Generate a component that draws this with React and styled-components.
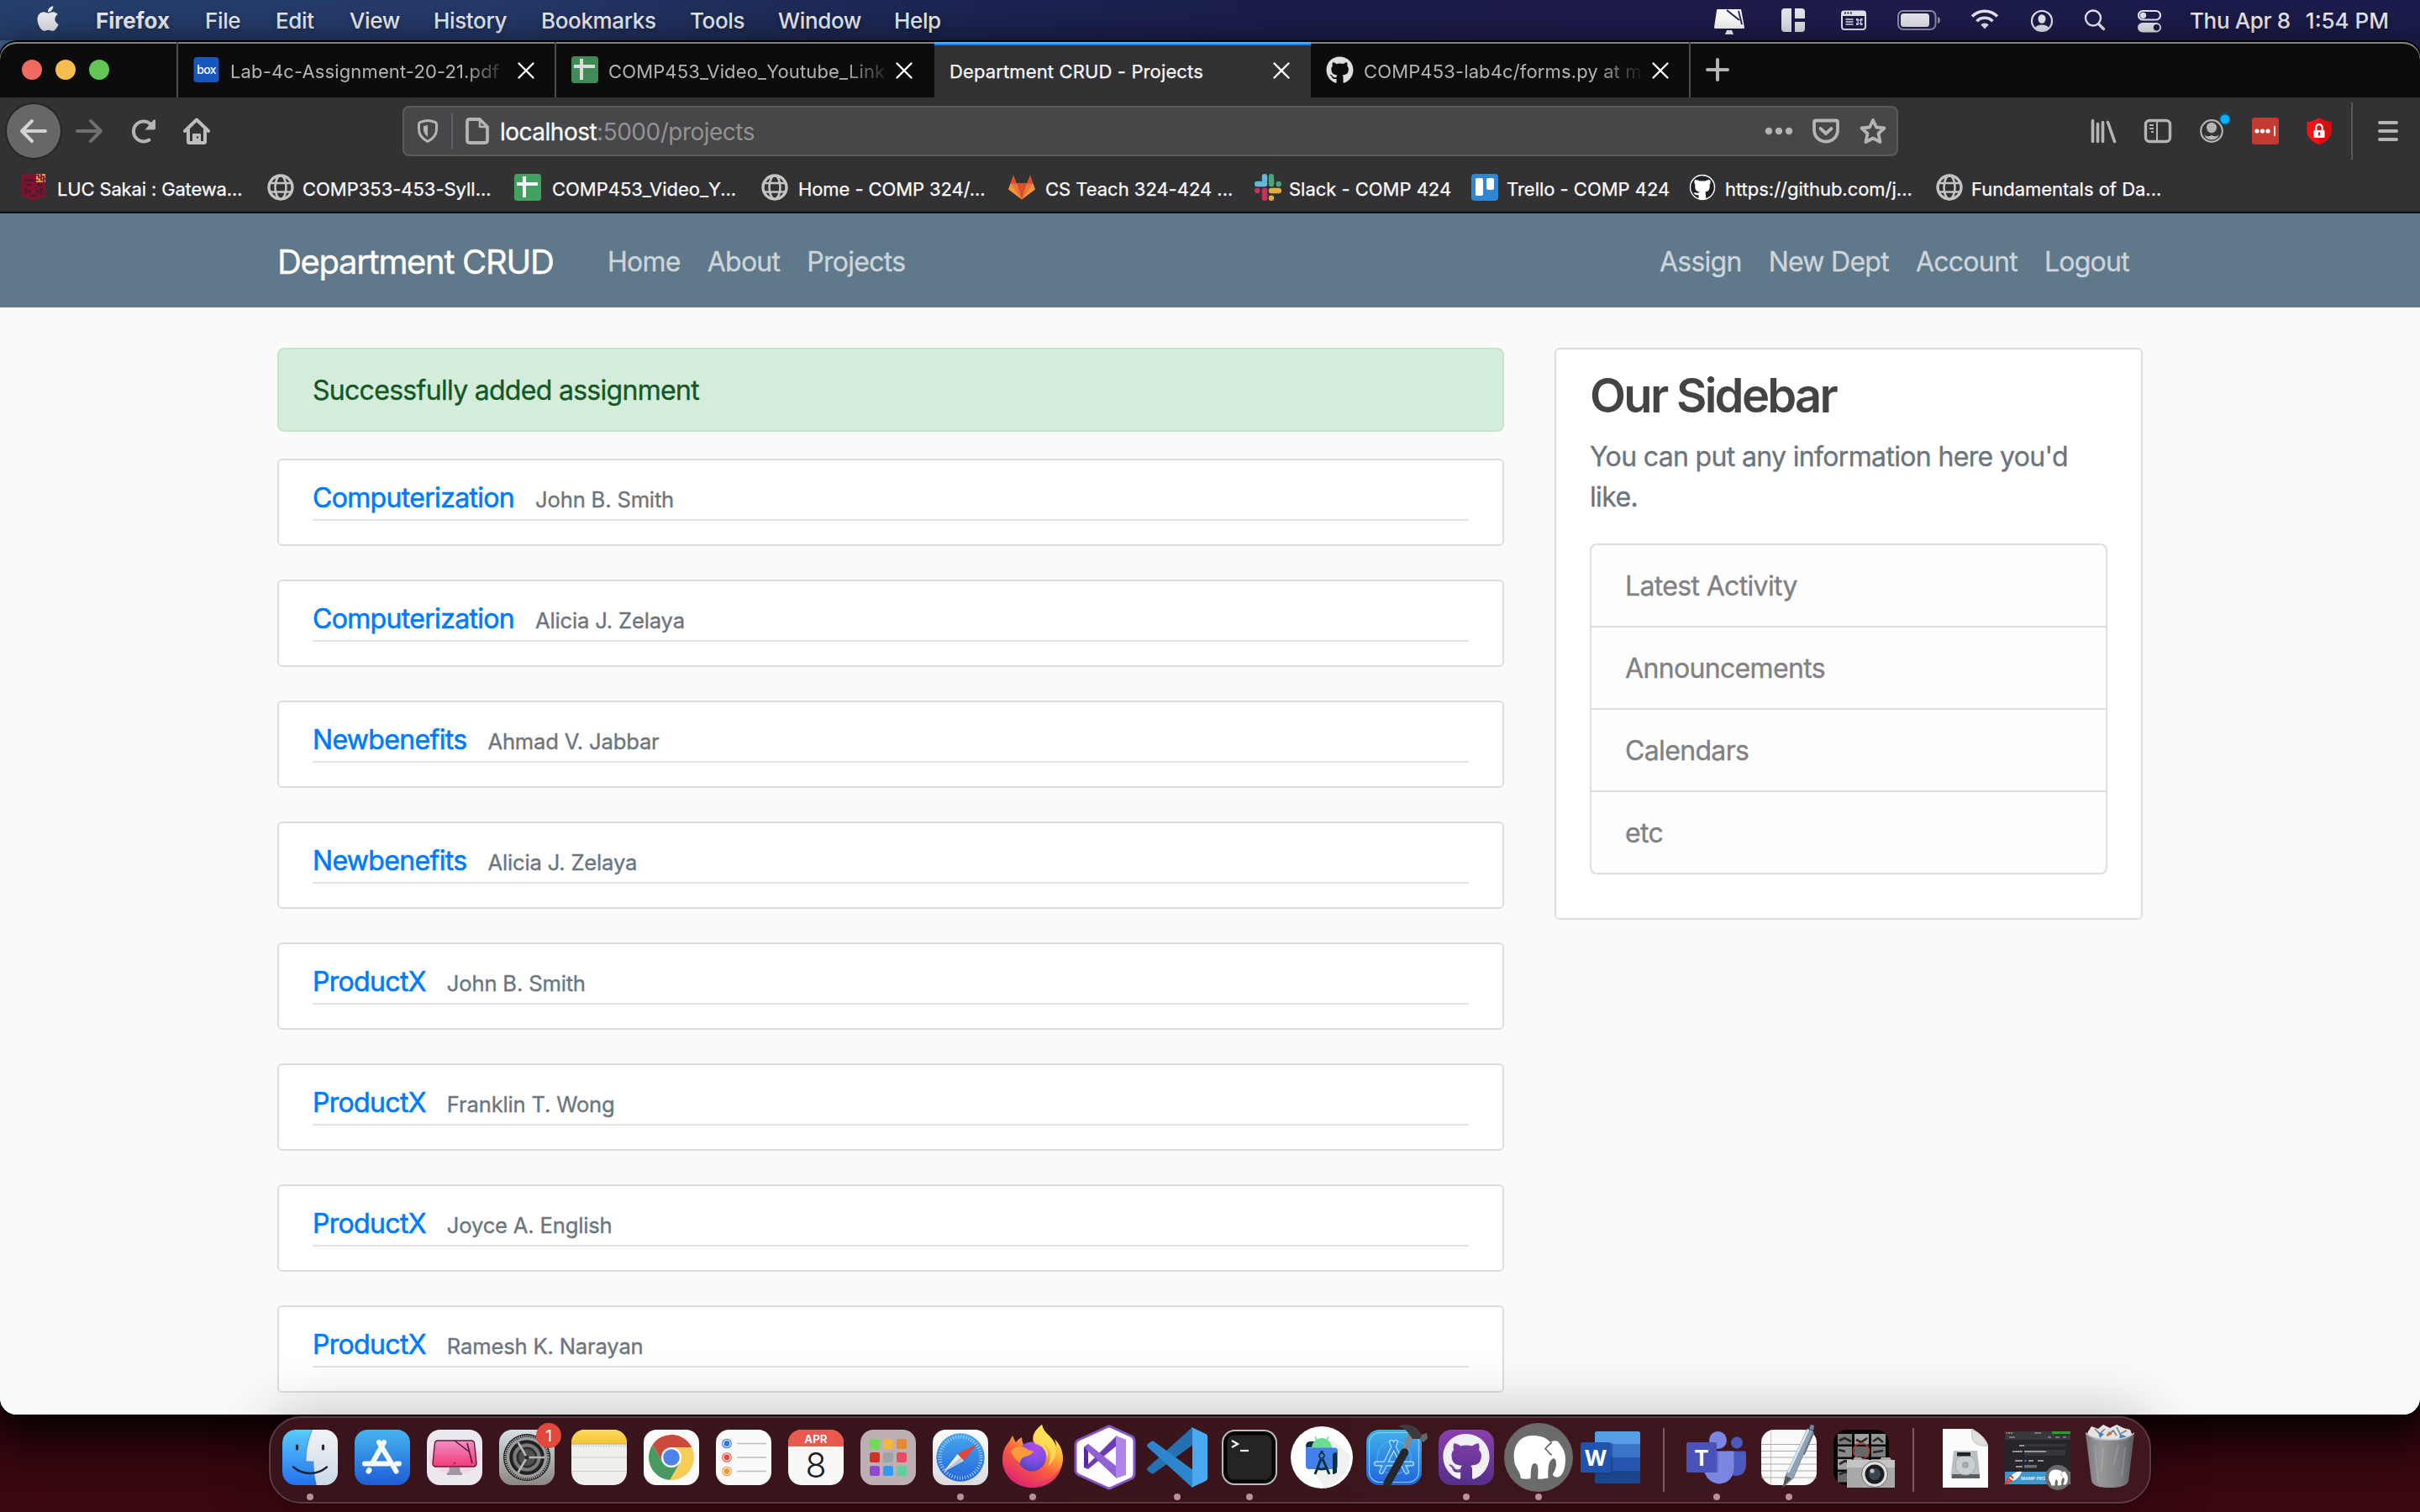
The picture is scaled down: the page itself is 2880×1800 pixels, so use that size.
import React from 'react';
import styled, { createGlobalStyle, css } from 'styled-components';
import { FaApple, FaGithub } from 'react-icons/fa';

const GlobalStyle = createGlobalStyle`
  * { box-sizing: border-box; }
  html, body { margin: 0; padding: 0; overflow: hidden; }
  body {
    font-family: Inter, Roboto, "Liberation Sans", sans-serif;
    -webkit-font-smoothing: antialiased;
  }
  h3, p, ul { margin: 0; padding: 0; }
  a { text-decoration: none; color: inherit; }
`;

/* ---------- Desktop ---------- */

const Desktop = styled.div`
  width: 2880px;
  height: 1800px;
  overflow: hidden;
  display: flex;
  flex-direction: column;
  background:
    linear-gradient(90deg, #47688c, #1f3a5e 33%, #1b1c48 60%, #1e1e50) 0 0 / 100% 100px no-repeat,
    linear-gradient(180deg, #1c0a24, #36060f 1500px, #38070f);
`;

const MenuBar = styled.header`
  height: 48px;
  flex: none;
  display: flex;
  align-items: center;
  color: #e9ebf0;
  font-size: 26px;
  font-weight: 500;
  letter-spacing: -0.014em;
  text-shadow: 0 2px 6px rgba(0, 0, 0, 0.3);
  background: linear-gradient(90deg, #253f6c, #25396a 20%, #1f2c58 32%, #1c2250 42%, #1b1d4a 55%, #1e1c4b 65%, #1c1d4d);
`;

const AppleSlot = styled.div`
  width: 114px;
  padding-left: 43px;
  display: flex;
  svg { width: 28px; height: 34px; margin-top: -4px; }
`;

const MenuItem = styled.span`
  width: ${(p) => p.$w}px;
  white-space: nowrap;
  font-weight: ${(p) => (p.$strong ? 700 : 500)};
  letter-spacing: ${(p) => (p.$strong ? '0' : 'inherit')};
`;

const StatusArea = styled.div`
  margin-left: auto;
  display: flex;
  align-items: center;
  padding-right: 37px;
`;

const StatusSlot = styled.div`
  width: ${(p) => p.$w}px;
  display: flex;
  justify-content: center;
`;

const Clock = styled.div`
  width: 238px;
  margin-left: 13px;
  display: flex;
  justify-content: space-between;
  white-space: nowrap;
  padding-left: 1px;
  span + span { letter-spacing: 0; }
`;

/* ---------- Browser window ---------- */

const Window = styled.section`
  height: 1634px;
  margin-top: 2px;
  flex: none;
  display: flex;
  flex-direction: column;
  overflow: hidden;
  border-radius: 20px;
  background: #fafafa;
  box-shadow: 0 0 0 2px #000, 0 20px 50px 10px rgba(0, 0, 0, 0.85);
`;

const TabStrip = styled.div`
  height: 66px;
  flex: none;
  display: flex;
  background: #0c0c0d;
  border-radius: 20px 20px 0 0;
  box-shadow: inset 0 2px 0 #828283;
`;

const TrafficLights = styled.div`
  width: 212px;
  padding: 0 0 0 26px;
  display: flex;
  align-items: center;
  gap: 16px;
  border-right: 2px solid #4b4b4c;
`;

const Light = styled.i`
  width: 24px;
  height: 24px;
  border-radius: 50%;
  background: ${(p) => p.$c};
`;

const Tab = styled.div`
  width: ${(p) => p.$w}px;
  display: flex;
  align-items: center;
  padding: 2px 0 0 18px;
  font-size: 22px;
  letter-spacing: 0.006em;
  color: #b4b4b6;
  border-right: 2px solid ${(p) => (p.$divider ? '#4b4b4c' : 'transparent')};
  ${(p) =>
    p.$active &&
    css`
      background: #323234;
      color: #f9f9fa;
      border-right: 0;
      box-shadow: inset 0 2px 0 #5cabf8, inset 0 4px 0 #0a84ff;
      -webkit-text-stroke: 0.25px currentColor;
    `}
  > svg { flex: none; margin: -2px 12px 0 0; }
`;

const TabTitle = styled.span`
  width: ${(p) => p.$w}px;
  padding-top: 2px;
  white-space: nowrap;
  ${(p) =>
    p.$fade &&
    css`
      mask-image: linear-gradient(90deg, #000 calc(100% - 56px), transparent);
    `}
`;

const CloseSlot = styled.span`
  margin-left: ${(p) => p.$gap}px;
  display: flex;
`;

const NewTab = styled.div`
  width: 64px;
  display: flex;
  align-items: center;
  justify-content: center;
`;

const Toolbar = styled.div`
  height: 80px;
  flex: none;
  display: flex;
  align-items: center;
  padding-left: 8px;
  background: #323234;
`;

const ToolButton = styled.div`
  width: 64px;
  height: 64px;
  margin-right: ${(p) => p.$gap || 0}px;
  display: flex;
  align-items: center;
  justify-content: center;
  border-radius: 50%;
  ${(p) =>
    p.$raised &&
    css`
      background: #676768;
      box-shadow: 0 0 0 2px #262627;
    `}
`;

const UrlBar = styled.div`
  width: 1780px;
  height: 60px;
  margin: 0 213px 0 213px;
  display: flex;
  align-items: center;
  padding: 0 10px 0 12px;
  border: 2px solid #5b5b5d;
  border-radius: 8px;
  background: #474749;
  > svg { flex: none; }
`;

const UrlDivider = styled.i`
  width: 2px;
  height: 42px;
  margin: 0 14px 0 12px;
  background: #5f6068;
`;

const Url = styled.div`
  margin: 2px auto 0 12px;
  font-size: 28px;
  letter-spacing: -0.018em;
  color: #929294;
  b {
    font-weight: 400;
    color: #fbfbfe;
    -webkit-text-stroke: 0.3px currentColor;
  }
`;

const UrlActions = styled.div`
  display: flex;
  align-items: center;
  gap: 20px;
`;

const ToolDivider = styled.i`
  width: 2px;
  height: 68px;
  margin: 0 10px 0 6px;
  background: #58585a;
`;

const BookmarksBar = styled.div`
  height: 58px;
  flex: none;
  display: flex;
  align-items: center;
  padding: 0 0 2px 24px;
  background: #323234;
  border-bottom: 2px solid #0c0c0d;
`;

const Bookmark = styled.div`
  width: ${(p) => p.$w}px;
  display: flex;
  align-items: center;
  gap: ${(p) => p.$gap}px;
  font-size: 22px;
  letter-spacing: ${(p) => p.$ls || '-0.001em'};
  white-space: nowrap;
  color: #fbfbfe;
  -webkit-text-stroke: 0.25px currentColor;
  svg { flex: none; }
  span { padding-top: 3px; }
`;

/* ---------- Page ---------- */

const Page = styled.div`
  flex: 1;
  min-height: 0;
  overflow: hidden;
  background: #fafafa;
  font-size: 32px;
  line-height: 48px;
  letter-spacing: -0.0205em;
  -webkit-text-stroke: 0.35px currentColor;
`;

const Navbar = styled.nav`
  height: 112px;
  background: #5f788a;
`;

const Container = styled.div`
  width: 2280px;
  height: 100%;
  margin: 0 auto;
  padding: 3px 30px 0;
  display: flex;
  align-items: center;
`;

const Brand = styled.a`
  width: 377px;
  font-size: 40px;
  letter-spacing: -0.033em;
  color: #fff;
`;

const NavGroup = styled.div`
  display: flex;
  gap: 32px;
  padding: 0 16px;
  letter-spacing: -0.023em;
  margin-left: ${(p) => (p.$end ? 'auto' : 0)};
`;

const NavLink = styled.a`
  color: #cbd5db;
`;

const Columns = styled.main`
  width: 2280px;
  margin: 48px auto 0;
  padding: 0 30px;
  display: grid;
  grid-template-columns: 1460px 700px;
  column-gap: 60px;
  align-items: start;
`;

const Alert = styled.div`
  height: 100px;
  margin-bottom: 32px;
  padding: 25px 40px 23px;
  border: 2px solid #c3e6cb;
  border-radius: 8px;
  background: #d4edda;
  color: #155724;
  letter-spacing: -0.022em;
`;

const Card = styled.article`
  margin-bottom: 40px;
  padding: 20px 40px;
  border: 2px solid #dddddd;
  border-radius: 6px;
  background: #fff;
`;

const CardMeta = styled.div`
  height: 52px;
  margin-bottom: 8px;
  padding-top: 1px;
  display: flex;
  align-items: baseline;
  gap: 25px;
  border-bottom: 2px solid #e3e3e3;
`;

const ProjectLink = styled.a`
  color: #007bff;
  letter-spacing: -0.021em;
  -webkit-text-stroke: 0.6px currentColor;
`;

const Person = styled.small`
  font-size: 25.6px;
  letter-spacing: -0.007em;
  color: #6c757d;
`;

const Sidebar = styled.aside`
  padding: 20px 40px 52px;
  border: 2px solid #dddddd;
  border-radius: 6px;
  background: #fff;
`;

const SidebarTitle = styled.h3`
  padding-top: 2px;
  margin-bottom: 15px;
  font-size: 56px;
  line-height: 67px;
  font-weight: 600;
  letter-spacing: -0.048em;
  color: #444;
  -webkit-text-stroke: 0;
`;

const SidebarText = styled.p`
  margin-bottom: 31px;
  color: #6c757d;
`;

const SidebarList = styled.ul`
  list-style: none;
  border: 2px solid #dcddde;
  border-radius: 8px;
  overflow: hidden;
  background: #fdfdfe;
`;

const SidebarItem = styled.li`
  padding: 25px 40px 23px;
  color: #818182;
  & + & { border-top: 2px solid #dcddde; }
`;

/* ---------- Dock ---------- */

const Dock = styled.footer`
  position: relative;
  width: 2240px;
  height: 104px;
  margin: 2px auto 0;
  flex: none;
  display: flex;
  padding-left: 4px;
  border: 2px solid #5c3a41;
  border-radius: 38px;
  background: linear-gradient(90deg, #39141c, #3b151c 50%, #41171f);
  box-shadow: 0 0 0 1px rgba(0, 0, 0, 0.5), 0 0 70px 6px rgba(0, 0, 0, 0.22);
`;

const DockSlot = styled.div`
  width: 86px;
  display: flex;
  svg { overflow: visible; flex: none; }
`;

const DockDivider = styled.i`
  width: 2px;
  height: 76px;
  margin: 12px ${(p) => p.$m}px 0;
  background: #7c5a62;
`;

/* ---------- Small icons, drawn round their own centre ---------- */

const Glyph = ({ w = 32, h = 32, children, ...rest }) => (
  <svg width={w} height={h} viewBox={`${-w / 2} ${-h / 2} ${w} ${h}`} fill="none" {...rest}>
    {children}
  </svg>
);

const LIGHT = '#e6e6ee';
const GREY = '#b4b4b6';

const StatusMonitor = () => (
  <Glyph w={44} h={48}>
    <path d="M-14-13H14L18 8.500Q18 10 16.500 10H-16.500Q-18 10-18 8.500L-15-11.500Q-15-13-14-13Z" fill="#fff" />
    <path d="M-3-12L12 0M11-11L15 5" stroke="#1c1d4b" strokeWidth="1.800" />
    <path d="M-3 12H3L5 17H-5Z" fill="#fff" />
  </Glyph>
);
const StatusPanels = () => (
  <Glyph w={44} h={48}>
    <path d="M-10-14H-2V14H-10Q-14 14-14 10V-10Q-14-14-10-14Z" fill={LIGHT} />
    <path d="M2-14H10Q14-14 14-10V-2H2Z" fill={LIGHT} />
    <path d="M2 2H14V10Q14 14 10 14H2Z" fill={LIGHT} />
  </Glyph>
);
const StatusWindow = () => (
  <Glyph w={44} h={48}>
    <rect x="-14" y="-10.500" width="28" height="21.500" rx="3" stroke={LIGHT} strokeWidth="2" />
    <path d="M-14-11H14V-5H-14Z" fill={LIGHT} />
    <path d="M-11-8.500h1.800M-7.500-8.500h1.800M-4-8.500h1.800" stroke="#1c1d4b" strokeWidth="2" />
    <path d="M-9.500-1h9M-9.500 2h9M-9.500 5h9" stroke={LIGHT} strokeWidth="1.600" />
    <path d="M5 0h3.500v4H5zM5 0v-1.500h-1.500V0zM8.500 0h1.500v-1.500H8.500zM5 4v1.500H3.500V4zM8.500 4v1.500h1.500V4z" stroke={LIGHT} strokeWidth="1.100" />
  </Glyph>
);
const StatusBattery = () => (
  <Glyph w={52} h={48}>
    <rect x="-24" y="-11" width="44.500" height="22" rx="6" stroke="#8d8ea6" strokeWidth="2" />
    <rect x="-21" y="-8" width="34" height="16" rx="3.500" fill={LIGHT} />
    <path d="M23-4Q26-3 26 0Q26 3 23 4Z" fill="#8d8ea6" />
  </Glyph>
);
const StatusWifi = () => (
  <Glyph w={44} h={48} stroke={LIGHT} strokeWidth="3.600">
    <path d="M-15-4.500A21 21 0 0 1 15-4.500M-9.500 1.200A13.500 13.500 0 0 1 9.500 1.200" />
    <path d="M0 10.500L-4.800 5.500A7 7 0 0 1 4.800 5.500Z" fill={LIGHT} stroke="none" />
  </Glyph>
);
const StatusUser = () => (
  <Glyph w={44} h={48}>
    <circle cx="0" cy="1" r="12" stroke={LIGHT} strokeWidth="2.200" />
    <ellipse cx="0" cy="-1.500" rx="4.500" ry="5.200" fill={LIGHT} />
    <path d="M-8.500 9.500Q-6 5.500 0 5.500Q6 5.500 8.500 9.500Q5 13 0 13Q-5 13-8.500 9.500Z" fill={LIGHT} />
  </Glyph>
);
const StatusSearch = () => (
  <Glyph w={44} h={48} stroke={LIGHT}>
    <circle cx="-2" cy="-2.500" r="9" strokeWidth="2.400" />
    <path d="M4.500 4.500L10.500 10.500" strokeWidth="3.400" strokeLinecap="round" />
  </Glyph>
);
const StatusControls = () => (
  <Glyph w={44} h={48}>
    <rect x="-13" y="-11" width="26" height="10.500" rx="5.250" stroke={LIGHT} strokeWidth="2.200" />
    <circle cx="-7.500" cy="-5.700" r="3.600" fill={LIGHT} />
    <rect x="-14" y="3" width="28" height="11.500" rx="5.750" fill={LIGHT} />
    <circle cx="8.500" cy="8.700" r="3.700" fill="#1c1d4b" />
  </Glyph>
);

const BoxIcon = () => (
  <Glyph>
    <rect x="-15.500" y="-15" width="30" height="30" rx="4" fill="#1858bd" />
    <text x="-0.500" y="5" textAnchor="middle" fontFamily="Inter" fontSize="14" fontWeight="500" letterSpacing="-0.700" fill="#fff">box</text>
  </Glyph>
);
const SheetsIcon = ({ dim }) => (
  <Glyph>
    <rect x="-16" y="-16" width="32" height="32" rx="3.500" fill={dim ? '#3f8a56' : '#43a15f'} />
    <path d="M-13-4H12M-4-13V12" stroke={dim ? '#dcdcdc' : '#fff'} strokeWidth="4" />
  </Glyph>
);
const CloseIcon = () => (
  <Glyph w={22} h={22} stroke="#fbfbfe" strokeWidth="2.400" strokeLinecap="round">
    <path d="M-8.500-8.500L8.500 8.500M8.500-8.500L-8.500 8.500" />
  </Glyph>
);
const PlusIcon = () => (
  <Glyph stroke={GREY} strokeWidth="4" strokeLinecap="round">
    <path d="M-12 0H12M0-12V12" />
  </Glyph>
);
const BackIcon = () => (
  <Glyph w={36} h={32} stroke="#d2d2d3" strokeWidth="4" strokeLinecap="round" strokeLinejoin="round">
    <path d="M14 0H-14M-2-12L-14 0L-2 12" />
  </Glyph>
);
const ForwardIcon = () => (
  <Glyph w={36} h={32} stroke="#6f6f71" strokeWidth="4" strokeLinecap="round" strokeLinejoin="round">
    <path d="M-14 0H14M2-12L14 0L2 12" />
  </Glyph>
);
const ReloadIcon = () => (
  <Glyph stroke={GREY} strokeWidth="4" strokeLinecap="round">
    <path d="M9.500-8A12 12 0 1 0 7.500 10.500" />
    <path d="M2.500-1.500H12.500Q15-1.500 15-4V-12Q15-15 12.500-13Z" fill={GREY} stroke="none" />
  </Glyph>
);
const HomeIcon = () => (
  <Glyph w={36} h={34} stroke="#bdbdbf" strokeWidth="4" strokeLinejoin="round" strokeLinecap="round">
    <path d="M-14 0L0-13.500L14 0M-10-2V12.500Q-10 14-8.500 14H8.500Q10 14 10 12.500V-2" />
    <path d="M-4 13V4H4V13" fill="#bdbdbf" strokeWidth="2" />
    <circle cx="1" cy="7.500" r="1.200" fill="#323234" stroke="none" />
  </Glyph>
);
const ShieldIcon = () => (
  <Glyph stroke={GREY} strokeWidth="3">
    <path d="M0-12.500Q5-12 9-10.500Q10.500-10 10.500-8V-2Q10.500 7 0 12.500Q-10.500 7-10.500-2V-8Q-10.500-10-9-10.500Q-5-12 0-12.500Z" />
    <path d="M0-7V7Q-5 3-5-2V-6Z" fill={GREY} stroke="none" />
  </Glyph>
);
const PageIcon = () => (
  <Glyph w={30} h={34} stroke={GREY} strokeWidth="3.800" strokeLinejoin="round">
    <path d="M3-14H-9Q-12-14-12-11V11Q-12 14-9 14H9Q12 14 12 11V-5Z" />
    <path d="M3-14V-5H12" strokeWidth="2.500" />
  </Glyph>
);
const MoreIcon = () => (
  <Glyph w={36}>
    <circle cx="-12" r="4.200" fill={GREY} />
    <circle r="4.200" fill={GREY} />
    <circle cx="12" r="4.200" fill={GREY} />
  </Glyph>
);
const PocketIcon = () => (
  <Glyph w={36} stroke={GREY} strokeWidth="3.800" strokeLinecap="round" strokeLinejoin="round">
    <path d="M-12-12.500H12Q14-12.500 14-10.500V-1A14 13.500 0 0 1-14-1V-10.500Q-14-12.500-12-12.500Z" />
    <path d="M-6.500-3L0 3L6.500-3" />
  </Glyph>
);
const StarIcon = () => (
  <Glyph w={36} h={34} stroke={GREY} strokeWidth="3.800" strokeLinejoin="round">
    <path d="M0-13L4-4.500L13.500-3.500L6.500 3L8.500 13L0 8.500L-8.500 13L-6.500 3L-13.500-3.500L-4-4.500Z" />
  </Glyph>
);
const LibraryIcon = () => (
  <Glyph w={34} stroke={GREY} strokeWidth="3.600" strokeLinecap="round">
    <path d="M-13.500-12.500V12.500M-7.500-8.500V12.500M-1.500-10.500V12.500M4.500-10.500L12.500 12.500" />
  </Glyph>
);
const SidebarIcon = () => (
  <Glyph w={34} stroke={GREY}>
    <rect x="-14.500" y="-12.500" width="29" height="25" rx="4.500" strokeWidth="3.400" />
    <path d="M-1-12V12" strokeWidth="2" />
    <path d="M-10-7h5M-10-3h5M-8 1h3" strokeWidth="2" />
  </Glyph>
);
const AccountIcon = () => (
  <Glyph w={44} h={44}>
    <circle r="12.800" stroke={GREY} strokeWidth="2.200" />
    <ellipse cy="-4" rx="6" ry="6.200" fill={GREY} />
    <path d="M-9 4Q-6 8 0 5Q6 8 9 4Q7 10.500 0 10.500Q-7 10.500-9 4Z" fill={GREY} />
    <circle cx="16" cy="-14" r="7.500" fill="#1c4862" />
    <circle cx="16" cy="-14" r="5.500" fill="#00b3ff" />
  </Glyph>
);
const PasswordIcon = () => (
  <Glyph>
    <rect x="-16" y="-16" width="32" height="32" rx="3" fill="#c33b31" />
    <circle cx="-10" r="2.600" fill="#fff" />
    <circle cx="-3.500" r="2.600" fill="#fff" />
    <circle cx="3" r="2.600" fill="#fff" />
    <path d="M11-6V6" stroke="#fff" strokeWidth="1.600" />
  </Glyph>
);
const BlockerIcon = () => (
  <Glyph w={34} h={34}>
    <path d="M0-16Q7-11 14.500-11V0Q14 11 0 16Q-14 11-14.500 0V-11Q-7-11 0-16Z" fill="#f01414" />
    <path d="M0-16Q7-11 14.500-11V0Q14 11 0 16Z" fill="#d90d0d" />
    <rect x="-6.500" y="-1" width="13" height="9" rx="1" fill="#fff" />
    <path d="M-3.800 0V-4A3.800 3.800 0 0 1 3.800-4V0" stroke="#fff" strokeWidth="2.200" />
    <path d="M0 1.500V5.500" stroke="#e01010" strokeWidth="2.200" />
  </Glyph>
);
const MenuIcon = () => (
  <Glyph stroke={GREY} strokeWidth="4" strokeLinecap="round">
    <path d="M-10-10H10M-10 0H10M-10 10H10" />
  </Glyph>
);

const CrestIcon = () => (
  <Glyph>
    <path d="M-14-16H14V8Q14 12 6 13L0 16L-6 13Q-14 12-14 8Z" fill="#7d1231" />
    <path d="M3-16H14V-6H3Z" fill="#d8a43a" />
    <path d="M3-14.500h3v3h3v3h3v2.500M9-16v3h3v3h2M3-8.500h3M6-15.500v2" stroke="#7d1231" strokeWidth="1.700" />
    <path d="M-12-8.500H0M-9-3h6M4-3h6M-9 1v7M-5 3v4M5 3v4M9 1v7M-3 10h7" stroke="#3b2029" strokeWidth="2.400" />
  </Glyph>
);
const GlobeIcon = () => (
  <Glyph stroke="#c4c4c5" strokeWidth="2.600">
    <circle r="14" strokeWidth="3.400" />
    <ellipse rx="6.500" ry="14" />
    <path d="M-12.500-5H12.500M-12.500 5.500H12.500" />
  </Glyph>
);
const GitlabIcon = () => (
  <Glyph>
    <path d="M0 14.500L-16 2.500L-13.500-4.500H13.500L16 2.500Z" fill="#f0973a" />
    <path d="M0 14.500L-6-4.500H6Z" fill="#d9502f" />
    <path d="M0 14.500L-13.500-4.500H-6ZM0 14.500L13.500-4.500H6Z" fill="#e9753a" />
    <path d="M-13.500-4.500L-10-15L-6-4.500ZM13.500-4.500L10-15L6-4.500Z" fill="#d9502f" />
  </Glyph>
);
const SlackIcon = () => (
  <Glyph strokeWidth="6.400" strokeLinecap="round">
    <path d="M-4-12.800v.1M-4-12.800v3h-.1M-12.800-4H-4" stroke="#62b8dc" />
    <path d="M4-12.800V-4M12.800-4h-.1" stroke="#4aa677" />
    <path d="M12.800 4H4M4 12.800v-.1" stroke="#e0ab49" />
    <path d="M-4 12.800V4M-12.800 4h.1" stroke="#c5325b" />
  </Glyph>
);
const TrelloIcon = () => (
  <Glyph>
    <rect x="-16" y="-16" width="32" height="32" rx="4" fill="#2f86d3" />
    <rect x="-11" y="-11" width="9" height="21" rx="2" fill="#fff" />
    <rect x="2" y="-11" width="9" height="14" rx="2" fill="#fff" />
  </Glyph>
);
const GithubFavicon = () => (
  <Glyph>
    <circle r="14.500" fill="#1d2126" stroke="#fff" strokeWidth="1.400" />
    <path d="M-9-9Q-5-9-3.500-7.500H3.500Q5-9 9-9Q10.500-5 8.500-3Q10 4 3.500 5.500L4.500 14H-4.500V9Q-9 10-10.500 6Q-7 7-4.500 6.500L-3.500 5.500Q-10 4-8.500-3Q-10.500-5-9-9Z" fill="#fff" />
  </Glyph>
);

/* ---------- Dock icons: the origin is the centre of the app tile ---------- */

const Art = ({ children, running }) => (
  <svg width="86" height="100" viewBox="-43 -47 86 100" fill="none">
    {children}
    {running && <circle cx="0" cy="47" r="4" fill="#bb8f97" />}
  </svg>
);
const Tile = (props) => <rect x="-33" y="-33" width="66" height="66" rx="15.500" {...props} />;
const Grad = ({ id, a, b, horizontal }) => (
  <linearGradient id={id} x1="0" y1="0" x2={horizontal ? 1 : 0} y2={horizontal ? 0 : 1}>
    <stop offset="0" stopColor={a} />
    <stop offset="1" stopColor={b} />
  </linearGradient>
);

const Elephant = () => (
  <>
    <path
      d="M-29 3C-31-14-22-26-8-26C2-26 9-24 14-18C17-20 20-20 23-19C27-14 32-8 32 2C32 14 28 24 22 23.500C17 23 16 20 18 18C22 12 22 2 18 1C13 3 11 8 11.500 24.500Q6 26-1 25.500C0 14 0 7-5 7C-9 8-9 14-9.500 25Q-15 26.500-21 25C-22 15-29 12-29 3Z"
      fill="#fff"
    />
    <path d="M16-18C11-14 9-12 8-10C12-9 11-4 16-3" stroke="#6e6e6e" strokeWidth="1.700" />
  </>
);

const FinderArt = () => (
  <Art running>
    <defs>
      <Grad id="fdA" a="#58cdf9" b="#2470ef" />
      <Grad id="fdB" a="#f2f3f5" b="#cdd8e8" />
      <clipPath id="fdC"><Tile /></clipPath>
    </defs>
    <g clipPath="url(#fdC)">
      <Tile fill="url(#fdA)" />
      <path d="M3-34C-3-20-5-8-5 5H4.500Q4 20 8 34H34V-34Z" fill="url(#fdB)" />
      <path d="M3-34C-3-20-5-8-5 5H4.500" stroke="#3a7fd8" strokeWidth="0.800" />
    </g>
    <path d="M-15.500-14V-10M15.500-14V-10" stroke="#1e2b3c" strokeWidth="3.200" strokeLinecap="round" />
    <path d="M-20 11.500Q-11 19 0 19Q11 19 20 11.500" stroke="#1a2233" strokeWidth="2.400" strokeLinecap="round" />
  </Art>
);
const AppStoreArt = () => (
  <Art>
    <defs><Grad id="asA" a="#45b5ee" b="#1f5cd6" /></defs>
    <Tile fill="url(#asA)" />
    <g stroke="#f6faff" strokeWidth="6" strokeLinecap="round">
      <path d="M2-18L-12 7" />
      <path d="M-16.500 16.500L-15.500 15" />
      <path d="M-4-18L16.500 16.500" />
      <path d="M-21 7.500H7M17 7.500H20" />
    </g>
  </Art>
);
const CleanerArt = () => (
  <Art>
    <defs><Grad id="cmA" a="#f08fc4" b="#f23a77" /></defs>
    <Tile fill="#ebe9ef" />
    <ellipse cx="0" cy="0" rx="31" ry="20" fill="#fbc4d6" opacity="0.550" />
    <path d="M-20-20H20Q23-20 23.500-17L26 7Q26 11 22 11H-22Q-26 11-26 7L-23.500-17Q-23-20-20-20Z" fill="url(#cmA)" stroke="#5a1c3c" strokeWidth="1.400" />
    <path d="M0-20L17-7M15-17L21 7" stroke="#471a31" strokeWidth="1.500" />
    <path d="M-6 12H6L7 18H9V21H-9V18H-7Z" fill="#9d97a5" />
    <circle cx="0" cy="7" r="1.300" fill="#b3225a" />
  </Art>
);
const SettingsArt = () => (
  <Art>
    <defs>
      <Grad id="spA" a="#d4dfe4" b="#8c8883" />
    </defs>
    <Tile fill="url(#spA)" />
    <circle r="28" fill="#1d1e20" />
    <circle r="25.500" stroke="#a9abad" strokeWidth="2.500" strokeDasharray="1.400 1.100" />
    <circle r="22.500" stroke="#9a9c9e" strokeWidth="3.500" />
    <circle r="18" fill="#2b2c2e" />
    <circle r="14.500" stroke="#77797b" strokeWidth="4" />
    <circle r="10" fill="#4c4e50" />
    <g stroke="#b5b7b9" strokeWidth="2.600">
      <path d="M0 0H21M0 0L-10.500-18M0 0L-10.500 18" />
    </g>
    <circle r="2.500" fill="#2b2c2e" />
    <circle cx="26" cy="-26" r="15" fill="#e0493b" />
    <text x="26" y="-19" textAnchor="middle" fontFamily="Inter" fontSize="19" fill="#fff">1</text>
  </Art>
);
const NotesArt = () => (
  <Art>
    <defs>
      <Grad id="ntA" a="#f9dc63" b="#f6c331" />
      <clipPath id="ntC"><Tile /></clipPath>
    </defs>
    <g clipPath="url(#ntC)">
      <Tile fill="#f1efed" />
      <path d="M-33-33H33V-16.500H-33Z" fill="url(#ntA)" />
      <path d="M-33-16H33" stroke="#a49a80" strokeWidth="1.200" />
      <path d="M-31-13.500H33" stroke="#bdbab5" strokeWidth="1.600" strokeDasharray="1.200 1.800" />
      <path d="M-33 0H33M-33 16.500H33" stroke="#d1cfcc" strokeWidth="1.200" />
    </g>
  </Art>
);
const ChromeArt = () => (
  <Art>
    <Tile fill="#fbfbfb" />
    <path d="M24.200-12A27 27 0 0 0-22.500-14.900L-10.400 6L0-12Z" fill="#ca4a3c" />
    <path d="M-22.500-14.900A27 27 0 0 0-1.700 26.900L10.400 6L-10.400 6Z" fill="#479b61" />
    <path d="M-1.700 26.900A27 27 0 0 0 24.200-12L0-12L10.400 6Z" fill="#f7cd58" />
    <circle r="12" fill="#fff" />
    <circle r="9.800" fill="#4f83ec" />
  </Art>
);
const RemindersArt = () => (
  <Art>
    <Tile fill="#fafaf9" />
    {[['#2b76e8', -16.5], ['#e04a3e', 0], ['#ed9a35', 16.5]].map(([c, y]) => (
      <g key={c}>
        <circle cx="-20" cy={y} r="5.300" stroke={c} strokeWidth="1.100" />
        <circle cx="-20" cy={y} r="3.400" fill={c} />
        <path d={`M-8 ${y}H27`} stroke="#bdbdc1" strokeWidth="1.300" />
      </g>
    ))}
  </Art>
);
const CalendarArt = () => (
  <Art>
    <defs><clipPath id="clC"><Tile /></clipPath></defs>
    <g clipPath="url(#clC)">
      <Tile fill="#f8f8f7" />
      <path d="M-33-33H33V-13H-33Z" fill="#e9594d" />
    </g>
    <text x="0" y="-17" textAnchor="middle" fontFamily="Inter" fontSize="13.500" fontWeight="600" fill="#fff">APR</text>
    <text x="0" y="23.500" textAnchor="middle" fontFamily="Inter" fontSize="41" fontWeight="300" fill="#1d1d1f">8</text>
  </Art>
);
const LaunchpadArt = () => (
  <Art>
    <Tile fill="#bdb0b5" />
    {['#6fdc55', '#f4b83a', '#e8892f', '#cf3226', '#9aa3a8', '#ea4a62', '#9448cf', '#2f9bf5', '#5fcfa0'].map((c, i) => (
      <rect key={c} x={-22 + (i % 3) * 16} y={-22 + Math.floor(i / 3) * 16} width="12" height="12" rx="2.600" fill={c} />
    ))}
  </Art>
);
const SafariArt = () => (
  <Art running>
    <defs><Grad id="sfA" a="#46a8ee" b="#2567db" /><Grad id="sfB" a="#fdfdfd" b="#dcdcde" /></defs>
    <Tile fill="url(#sfB)" />
    <circle r="28.700" fill="url(#sfA)" />
    <circle r="24.500" stroke="#cfe4fa" strokeWidth="4" strokeDasharray="0.800 2.400" />
    <path d="M20-16L4 4L-3.500-4Z" fill="#e2453a" />
    <path d="M-20 17L-3.500-4L4 4Z" fill="#eef0f2" />
    <path d="M-20 17L4 4L0 0Z" fill="#c3c8ce" />
  </Art>
);
const FirefoxArt = () => (
  <Art running>
    <defs>
      <linearGradient id="ffA" x1="0.900" y1="0" x2="0.300" y2="1">
        <stop offset="0.100" stopColor="#fff36b" />
        <stop offset="0.350" stopColor="#ffb43d" />
        <stop offset="0.620" stopColor="#fb5d3c" />
        <stop offset="1" stopColor="#dd2473" />
      </linearGradient>
      <radialGradient id="ffB" cx="0.600" cy="0.200" r="0.900">
        <stop offset="0" stopColor="#b34ae8" />
        <stop offset="0.550" stopColor="#7a4fe0" />
        <stop offset="1" stopColor="#4a3db0" />
      </radialGradient>
    </defs>
    <path
      d="M-36 3C-36-7-33-13-28-19L-24-26Q-22-21-20-18Q-17-22-13-24Q-13-18-10-14L2-16C-3-25 4-34 11-39C13-28 24-26 28-13Q28-18 26-22C34-14 36-6 36 2C35 22 19 36 0 36C-20 36-36 22-36 3Z"
      fill="url(#ffA)"
    />
    <path d="M-36 4C-30 22-16 31 4 30C18 29 30 20 35 8C33 25 19 36 0 36C-20 36-35 23-36 4Z" fill="#dc2a76" opacity="0.450" />
    <ellipse cx="-1" cy="-1" rx="17" ry="17.500" fill="url(#ffB)" />
    <path d="M11-39C3-32-2-25 3-16C12-14 16-8 17 0C20-6 16-13 12-17C22-12 24 2 17 11C27 4 31-8 25-18C22-25 13-28 11-39Z" fill="#ffdf57" opacity="0.850" />
    <path d="M-26-8Q-18-15-10-12Q-5-8 1-7Q-1-3-9-1Q-15 1-15 7Q-24 0-26-8Z" fill="#fb9a3b" />
  </Art>
);
const VisualStudioArt = () => (
  <Art>
    <path d="M-31-21L2-36Q5-38 8-36L32-25Q35-23 35-19V19Q35 23 32 25L8 36Q5 38 2 36L-31 21Q-35 19-35 15V-15Q-35-19-31-21Z" fill="#fdfdff" stroke="#8055c4" strokeWidth="3" />
    <path d="M-25-12L-20-16V14L-25 12Z" fill="#57289a" />
    <path d="M-20-16L14 11V25L-25-12Z" fill="#8452c8" />
    <path d="M-20 14L14-14V-26L-24 12Z" fill="#6b3bb4" />
    <path d="M-20-16L14 11V24L-22-9Z" fill="#9162d2" />
    <path d="M13-26L25-21V21L13 25Z" fill="#ad85ea" />
  </Art>
);
const VSCodeArt = () => (
  <Art running>
    <path d="M18-36L-35 12Q-37 14-35 16L-31 19Q-29 20-27 18.500L20-16Z" fill="#2470b0" />
    <path d="M18 36L-35-12Q-37-14-35-16L-31-19Q-29-20-27-18.500L20 16Z" fill="#2d86cd" />
    <path d="M17-36L34-28Q36-27 36-25V25Q36 27 34 28L17 36Q18 34 18 32V-32Q18-34 17-36Z" fill="#4aa9f0" />
  </Art>
);
const TerminalArt = () => (
  <Art running>
    <Tile fill="#b9bfc1" />
    <rect x="-31" y="-31" width="62" height="62" rx="13.500" fill="#050505" />
    <rect x="-26.500" y="-26.500" width="53" height="53" rx="8" fill="#242424" />
    <path d="M-21-20L-14-16L-21-12" stroke="#f2f2f2" strokeWidth="2.200" />
    <path d="M-11-8H-1" stroke="#f2f2f2" strokeWidth="2.200" />
  </Art>
);
const AndroidStudioArt = () => (
  <Art>
    <circle r="37" fill="#fff" />
    <path d="M12-22L34-2Q32 26 4 37L-8 20Z" fill="#f0f0f0" />
    <path d="M-19-13Q-19-19-14-19H-9V-12H-19Z" fill="#12303f" />
    <path d="M-12-11A12 12 0 0 1 12-11Z" fill="#6ddb91" />
    <path d="M-6-20L-8-25M6-20L8-25" stroke="#6ddb91" strokeWidth="1.600" />
    <path d="M-19-13Q-17-11.500-14-11.500H16Q19-11.500 19-8V10Q19 14 15 14H-15Q-19 14-19 10Z" fill="#4480ea" />
    <path d="M13-4Q15-6 18-6V18Q16 20 13 20Z" fill="#12303f" />
    <circle cx="0" cy="-2" r="3" stroke="#12303f" strokeWidth="1.600" />
    <path d="M0-8V-5M-1 2L-8 20M1 2L9 20M-5 13Q0 15 5 13" stroke="#12303f" strokeWidth="3" />
  </Art>
);
const XcodeArt = () => (
  <Art>
    <defs><Grad id="xcA" a="#3fb2e8" b="#2164e0" /></defs>
    <Tile fill="url(#xcA)" />
    <rect x="-29.500" y="-29.500" width="59" height="59" rx="12.500" stroke="#8ed0f7" strokeWidth="1.200" />
    <circle r="20" stroke="#6fb9f0" strokeWidth="0.800" />
    <g stroke="#b9e1fb" strokeWidth="6" strokeLinecap="round">
      <path d="M2-18L-15 17M-3-18L15 17M-21 7.500H21" />
    </g>
    <g stroke="#338dea" strokeWidth="3.600" strokeLinecap="round">
      <path d="M2-18L-15 17M-3-18L15 17M-21 7.500H21" />
    </g>
    <path d="M21-28L12-6" stroke="#85868a" strokeWidth="7" />
    <path d="M12.500-6L-8 31" stroke="#26272a" strokeWidth="9.500" strokeLinecap="round" />
    <path d="M5-37Q14-42 27-35L33-27L39-29L40-23L35-18L31-22L22-22L17-29Q13-35 5-37Z" fill="#3c3d41" />
    <path d="M33-27L39-29L40-23L35-18L31-22Z" fill="#66676c" />
  </Art>
);
const GithubArt = () => (
  <Art running>
    <defs><Grad id="ghA" a="#8a3fae" b="#54308a" /></defs>
    <Tile fill="url(#ghA)" />
    <FaGithub x="-28.500" y="-29" size={57} color="#f0eff3" />
  </Art>
);
const MampArt = () => (
  <Art running>
    <circle r="41" fill="#6b6b6b" />
    <Elephant />
  </Art>
);
const WordArt = () => (
  <Art>
    <rect x="-19" y="-31" width="54" height="62" rx="2.500" fill="#1a478c" />
    <path d="M-19 0H35V16H-19Z" fill="#2456b0" />
    <path d="M-19-16H35V0H-19Z" fill="#3975c8" />
    <path d="M-16.500-31H32.500Q35-31 35-28.500V-16H-19V-28.500Q-19-31-16.500-31Z" fill="#569fe6" />
    <path d="M-19-17H2Q3 18 1 21H-19Z" fill="#173d7a" opacity="0.500" />
    <rect x="-36" y="-18" width="36" height="36" rx="2.500" fill="#1f54ae" />
    <text x="-18" y="9.500" textAnchor="middle" fontFamily="Inter" fontSize="26" fontWeight="700" fill="#fff">W</text>
  </Art>
);
const TeamsArt = () => (
  <Art running>
    <circle cx="24" cy="-17.500" r="7" fill="#4c59be" />
    <path d="M12-7.500H33Q35-7.500 35-5V10Q34 21 24 22Q16 22 12 16Z" fill="#4c59be" />
    <circle cx="1.500" cy="-20.500" r="10.500" fill="#7b85e2" />
    <path d="M-16-7.500H18Q20.500-7.500 20.500-5V12Q20 30 3 31.500Q-13 30-16 12Z" fill="#7b85e2" />
    <path d="M-16-7.500H2V18H-14.500Q-16 15-16 12Z" fill="#454fa8" opacity="0.450" />
    <rect x="-36" y="-18" width="36" height="36" rx="2.500" fill="#4a54b8" />
    <text x="-18" y="9.500" textAnchor="middle" fontFamily="Inter" fontSize="26" fontWeight="700" fill="#fff">T</text>
  </Art>
);
const TextEditArt = () => (
  <Art running>
    <Tile fill="#fafafa" />
    <path d="M-21.500-33V33" stroke="#f3b6b6" strokeWidth="1.200" />
    <path d="M-33-15.500H33M-33-7.500H33M-33 0H33M-33 8H33M-33 16H33M-33 24H33" stroke="#a9a9ad" strokeWidth="1.200" />
    <path d="M-7 35L-4 22L22-34L29-31L5 25Z" fill="#8fa3b5" stroke="#6c7c8c" strokeWidth="0.800" />
    <path d="M-1 18L23-33" stroke="#dfe9f1" strokeWidth="2.400" />
    <path d="M24-34L26-39L30-38L29-32Z" fill="#6a8bab" />
    <path d="M-7 35L-4 22L3 25Z" fill="#57524e" />
    <path d="M29-29L18-4" stroke="#5f7080" strokeWidth="2" strokeLinecap="round" />
  </Art>
);
const ImageCaptureArt = () => (
  <Art>
    <Tile fill="#060606" />
    {[0, 1, 2].map((c) =>
      [0, 1, 2, 3].map((r) => (
        <rect key={`${c}${r}`} x={-28 + c * 20} y={-28 + r * 15} width="17" height="12.500" fill={['#7d7d7d', '#8c8c8c', '#a0a0a0', '#696969', '#949494'][(c * 2 + r) % 5]} />
      ))
    )}
    <path d="M-26-20l6-3 8 4M-6-21l6 3 7-5M14-19l6-4 6 5M-27-9l8 2M14-6l12-2M-26 8l7-4 6 3M-26 20l8-3 5 6" stroke="#262626" strokeWidth="2.600" />
    <circle cx="0" cy="-7.500" r="9.500" stroke="#c8382c" strokeWidth="1.500" />
    <path d="M-17 3H-10L-8 0H0L2 3H22L24 0H34L36 3H40V36H-17Z" fill="#a9a9ab" />
    <path d="M-17 3H40V12H-17Z" fill="#c5c5c7" />
    <circle cx="16" cy="20" r="15.500" fill="#dededf" stroke="#707072" strokeWidth="1" />
    <circle cx="16" cy="20" r="11.500" fill="#1b1d21" />
    <circle cx="16" cy="20" r="7" fill="#3c444d" />
    <circle cx="13" cy="16" r="2.600" fill="#b9c4cd" />
  </Art>
);
const DriveArt = () => (
  <Art>
    <path d="M-27-34H8L27-14V36H-27Z" fill="#fbfbfb" />
    <path d="M8-34Q6-20 12-17Q18-13 27-14Q24-25 8-34Z" fill="#dedede" stroke="#b6b6b6" strokeWidth="0.800" />
    <path d="M-14-8H14L17 19V25H-17V19Z" fill="#b9c1c3" />
    <path d="M-16 20H17V25H-16Z" fill="#5b6163" />
    <circle cx="0" cy="9" r="12" fill="#c9d0d2" stroke="#a0a8aa" strokeWidth="1" />
    <circle cx="0" cy="9" r="4" fill="#a2aaad" />
    <rect x="-10" y="-6" width="16" height="4.500" fill="#1f2224" />
  </Art>
);
const MampWindowArt = () => (
  <Art>
    <rect x="-39" y="-31" width="78" height="63" fill="#25252b" />
    <path d="M-39-31H39V-21H-39Z" fill="#37373d" />
    <path d="M17-31H39V-28H17Z" fill="#2f9a2f" />
    <circle cx="-37" cy="-29" r="1" fill="#e0524a" />
    <circle cx="-34" cy="-29" r="1" fill="#e8b23c" />
    <circle cx="-31" cy="-29" r="1" fill="#999" />
    <path d="M-34-24h7M-4-29h8M12-24h4M21-24h5M30-24h4" stroke="#8a8a90" strokeWidth="1.400" />
    <path d="M-16-16H33V-12.500H-16ZM-16-9H33V-2H-16Z" fill="#35353c" />
    <path d="M-22-14h6M-30-7h12M-27 4h9M-26 11h8M-16-7h26M-11 4h6M0 4h7" stroke="#b9b9be" strokeWidth="1.300" />
    <rect x="-16" y="9" width="15" height="3.500" fill="#6d6d74" />
    <circle cx="-14.500" cy="4" r="1.300" fill="#3b82f0" />
    <path d="M-39 17H39V32H-39Z" fill="#3f97cf" />
    <path d="M-38 30L-32 22Q-26 16-19 17Q-21 23-27 27Z" fill="#f2f2f2" />
    <path d="M-33 21L-29 25M-38 31L-35 25L-31 28Z" stroke="#d9402e" strokeWidth="2" fill="#f0a030" />
    <text x="-20" y="27" fontFamily="Inter" fontSize="5.300" fontWeight="600" fill="#e6f3fb">MAMP PRO 6</text>
    <circle cx="24" cy="24" r="15" fill="#6b6b6b" />
    <g transform="translate(24 24) scale(0.370)"><Elephant /></g>
  </Art>
);
const TrashArt = () => (
  <Art>
    <defs>
      <linearGradient id="trA" x1="0" y1="0" x2="1" y2="0">
        <stop offset="0" stopColor="#7e8286" />
        <stop offset="0.300" stopColor="#a0a3a5" />
        <stop offset="0.700" stopColor="#84888b" />
        <stop offset="1" stopColor="#5b5f63" />
      </linearGradient>
    </defs>
    <path d="M-27-29L-22-37L-14-34L-8-39L0-35L8-39L16-35L24-33L27-26L20-20H-20Z" fill="#e4e4e4" />
    <path d="M-18-34l6 6 6-6M-4-26l8-6 4 6M8-36l4 8 8-4" stroke="#7b7f84" strokeWidth="1.600" />
    <path d="M-14-30l7 2-5 5zM12-28l8 3-9 3z" fill="#3d86c4" />
    <path d="M-2-31l5 3-6 3z" fill="#d96a3c" />
    <path d="M-29-29Q-20-21 0-21Q20-21 29-29L22 28Q20 36 0 36Q-20 36-22 28Z" fill="url(#trA)" opacity="0.920" />
    <path d="M-29-29Q-20-21 0-21Q20-21 29-29" stroke="#c2c6c8" strokeWidth="1.400" />
    <path d="M-18-14L-14 28M-8-12L-10 16M10-14L4 10M18-12L14 24" stroke="#c9ccce" strokeWidth="2" opacity="0.250" />
  </Art>
);

/* ---------- Content ---------- */

const MENUS = [['Firefox', 130], ['File', 84], ['Edit', 88], ['View', 100], ['History', 128], ['Bookmarks', 177], ['Tools', 105], ['Window', 138], ['Help', 60]];

const STATUS = [[StatusMonitor, 76], [StatusPanels, 76], [StatusWindow, 68], [StatusBattery, 86], [StatusWifi, 72], [StatusUser, 64], [StatusSearch, 62], [StatusControls, 68]];

const BOOKMARKS = [
  [CrestIcon, 'LUC Sakai : Gatewa...', 294, 12, '-0.007em'],
  [GlobeIcon, 'COMP353-453-Syll...', 294, 10],
  [SheetsIcon, 'COMP453_Video_Y...', 294, 13],
  [GlobeIcon, 'Home - COMP 324/...', 294, 12, '-0.004em'],
  [GitlabIcon, 'CS Teach 324-424 ...', 293, 12],
  [SlackIcon, 'Slack - COMP 424', 258, 9],
  [TrelloIcon, 'Trello - COMP 424', 259, 10],
  [GithubFavicon, 'https://github.com/j...', 294, 11],
  [GlobeIcon, 'Fundamentals of Da...', 294, 10],
];

const PROJECTS = [
  ['Computerization', 'John B. Smith'],
  ['Computerization', 'Alicia J. Zelaya'],
  ['Newbenefits', 'Ahmad V. Jabbar'],
  ['Newbenefits', 'Alicia J. Zelaya'],
  ['ProductX', 'John B. Smith'],
  ['ProductX', 'Franklin T. Wong'],
  ['ProductX', 'Joyce A. English'],
  ['ProductX', 'Ramesh K. Narayan'],
];

const DOCK_APPS = [
  FinderArt, AppStoreArt, CleanerArt, SettingsArt, NotesArt, ChromeArt, RemindersArt, CalendarArt, LaunchpadArt, SafariArt,
  FirefoxArt, VisualStudioArt, VSCodeArt, TerminalArt, AndroidStudioArt, XcodeArt, GithubArt, MampArt, WordArt,
];
const DOCK_RECENT = [TeamsArt, TextEditArt, ImageCaptureArt];
const DOCK_FILES = [DriveArt, MampWindowArt, TrashArt];

const DockGroup = ({ items }) => items.map((Icon, i) => <DockSlot key={i}><Icon /></DockSlot>);

export default function App() {
  return (
    <Desktop>
      <GlobalStyle />
      <MenuBar>
        <AppleSlot><FaApple /></AppleSlot>
        {MENUS.map(([label, w], i) => (
          <MenuItem key={label} $w={w} $strong={i === 0}>{label}</MenuItem>
        ))}
        <StatusArea>
          {STATUS.map(([Icon, w], i) => (
            <StatusSlot key={i} $w={w}><Icon /></StatusSlot>
          ))}
          <Clock>
            <span>Thu Apr 8</span>
            <span>1:54 PM</span>
          </Clock>
        </StatusArea>
      </MenuBar>

      <Window>
        <TabStrip>
          <TrafficLights>
            <Light $c="#ee6a5f" />
            <Light $c="#f5bd4f" />
            <Light $c="#62c655" />
          </TrafficLights>
          <Tab $w={450} $divider>
            <BoxIcon />
            <TabTitle $w={334} $fade>Lab-4c-Assignment-20-21.pdf</TabTitle>
            <CloseSlot $gap={7}><CloseIcon /></CloseSlot>
          </Tab>
          <Tab $w={450}>
            <SheetsIcon dim />
            <TabTitle $w={338} $fade>COMP453_Video_Youtube_Link</TabTitle>
            <CloseSlot $gap={3}><CloseIcon /></CloseSlot>
          </Tab>
          <Tab $w={448} $active>
            <TabTitle $w={340}>Department CRUD - Projects</TabTitle>
            <CloseSlot $gap={44}><CloseIcon /></CloseSlot>
          </Tab>
          <Tab $w={452} $divider>
            <FaGithub size={33} color="#dededf" />
            <TabTitle $w={334} $fade>COMP453-lab4c/forms.py at ma</TabTitle>
            <CloseSlot $gap={8}><CloseIcon /></CloseSlot>
          </Tab>
          <NewTab><PlusIcon /></NewTab>
        </TabStrip>

        <Toolbar>
          <ToolButton $raised $gap={2}><BackIcon /></ToolButton>
          <ToolButton><ForwardIcon /></ToolButton>
          <ToolButton><ReloadIcon /></ToolButton>
          <ToolButton><HomeIcon /></ToolButton>
          <UrlBar>
            <ShieldIcon />
            <UrlDivider />
            <PageIcon />
            <Url><b>localhost</b>:5000/projects</Url>
            <UrlActions>
              <MoreIcon />
              <PocketIcon />
              <StarIcon />
            </UrlActions>
          </UrlBar>
          <ToolButton><LibraryIcon /></ToolButton>
          <ToolButton><SidebarIcon /></ToolButton>
          <ToolButton><AccountIcon /></ToolButton>
          <ToolButton><PasswordIcon /></ToolButton>
          <ToolButton><BlockerIcon /></ToolButton>
          <ToolDivider />
          <ToolButton><MenuIcon /></ToolButton>
        </Toolbar>

        <BookmarksBar>
          {BOOKMARKS.map(([Icon, label, w, gap, ls]) => (
            <Bookmark key={label} $w={w} $gap={gap} $ls={ls}>
              <Icon />
              <span>{label}</span>
            </Bookmark>
          ))}
        </BookmarksBar>

        <Page>
          <Navbar>
            <Container>
              <Brand>Department CRUD</Brand>
              <NavGroup>
                <NavLink>Home</NavLink>
                <NavLink>About</NavLink>
                <NavLink>Projects</NavLink>
              </NavGroup>
              <NavGroup $end>
                <NavLink>Assign</NavLink>
                <NavLink>New Dept</NavLink>
                <NavLink>Account</NavLink>
                <NavLink>Logout</NavLink>
              </NavGroup>
            </Container>
          </Navbar>
          <Columns>
            <div>
              <Alert>Successfully added assignment</Alert>
              {PROJECTS.map(([name, person], i) => (
                <Card key={i}>
                  <CardMeta>
                    <ProjectLink>{name}</ProjectLink>
                    <Person>{person}</Person>
                  </CardMeta>
                </Card>
              ))}
            </div>
            <Sidebar>
              <SidebarTitle>Our Sidebar</SidebarTitle>
              <SidebarText>You can put any information here you'd like.</SidebarText>
              <SidebarList>
                {['Latest Activity', 'Announcements', 'Calendars', 'etc'].map((t) => (
                  <SidebarItem key={t}>{t}</SidebarItem>
                ))}
              </SidebarList>
            </Sidebar>
          </Columns>
        </Page>
      </Window>

      <Dock>
        <DockGroup items={DOCK_APPS} />
        <DockDivider $m={19} />
        <DockGroup items={DOCK_RECENT} />
        <DockDivider $m={18} />
        <DockGroup items={DOCK_FILES} />
      </Dock>
    </Desktop>
  );
}
